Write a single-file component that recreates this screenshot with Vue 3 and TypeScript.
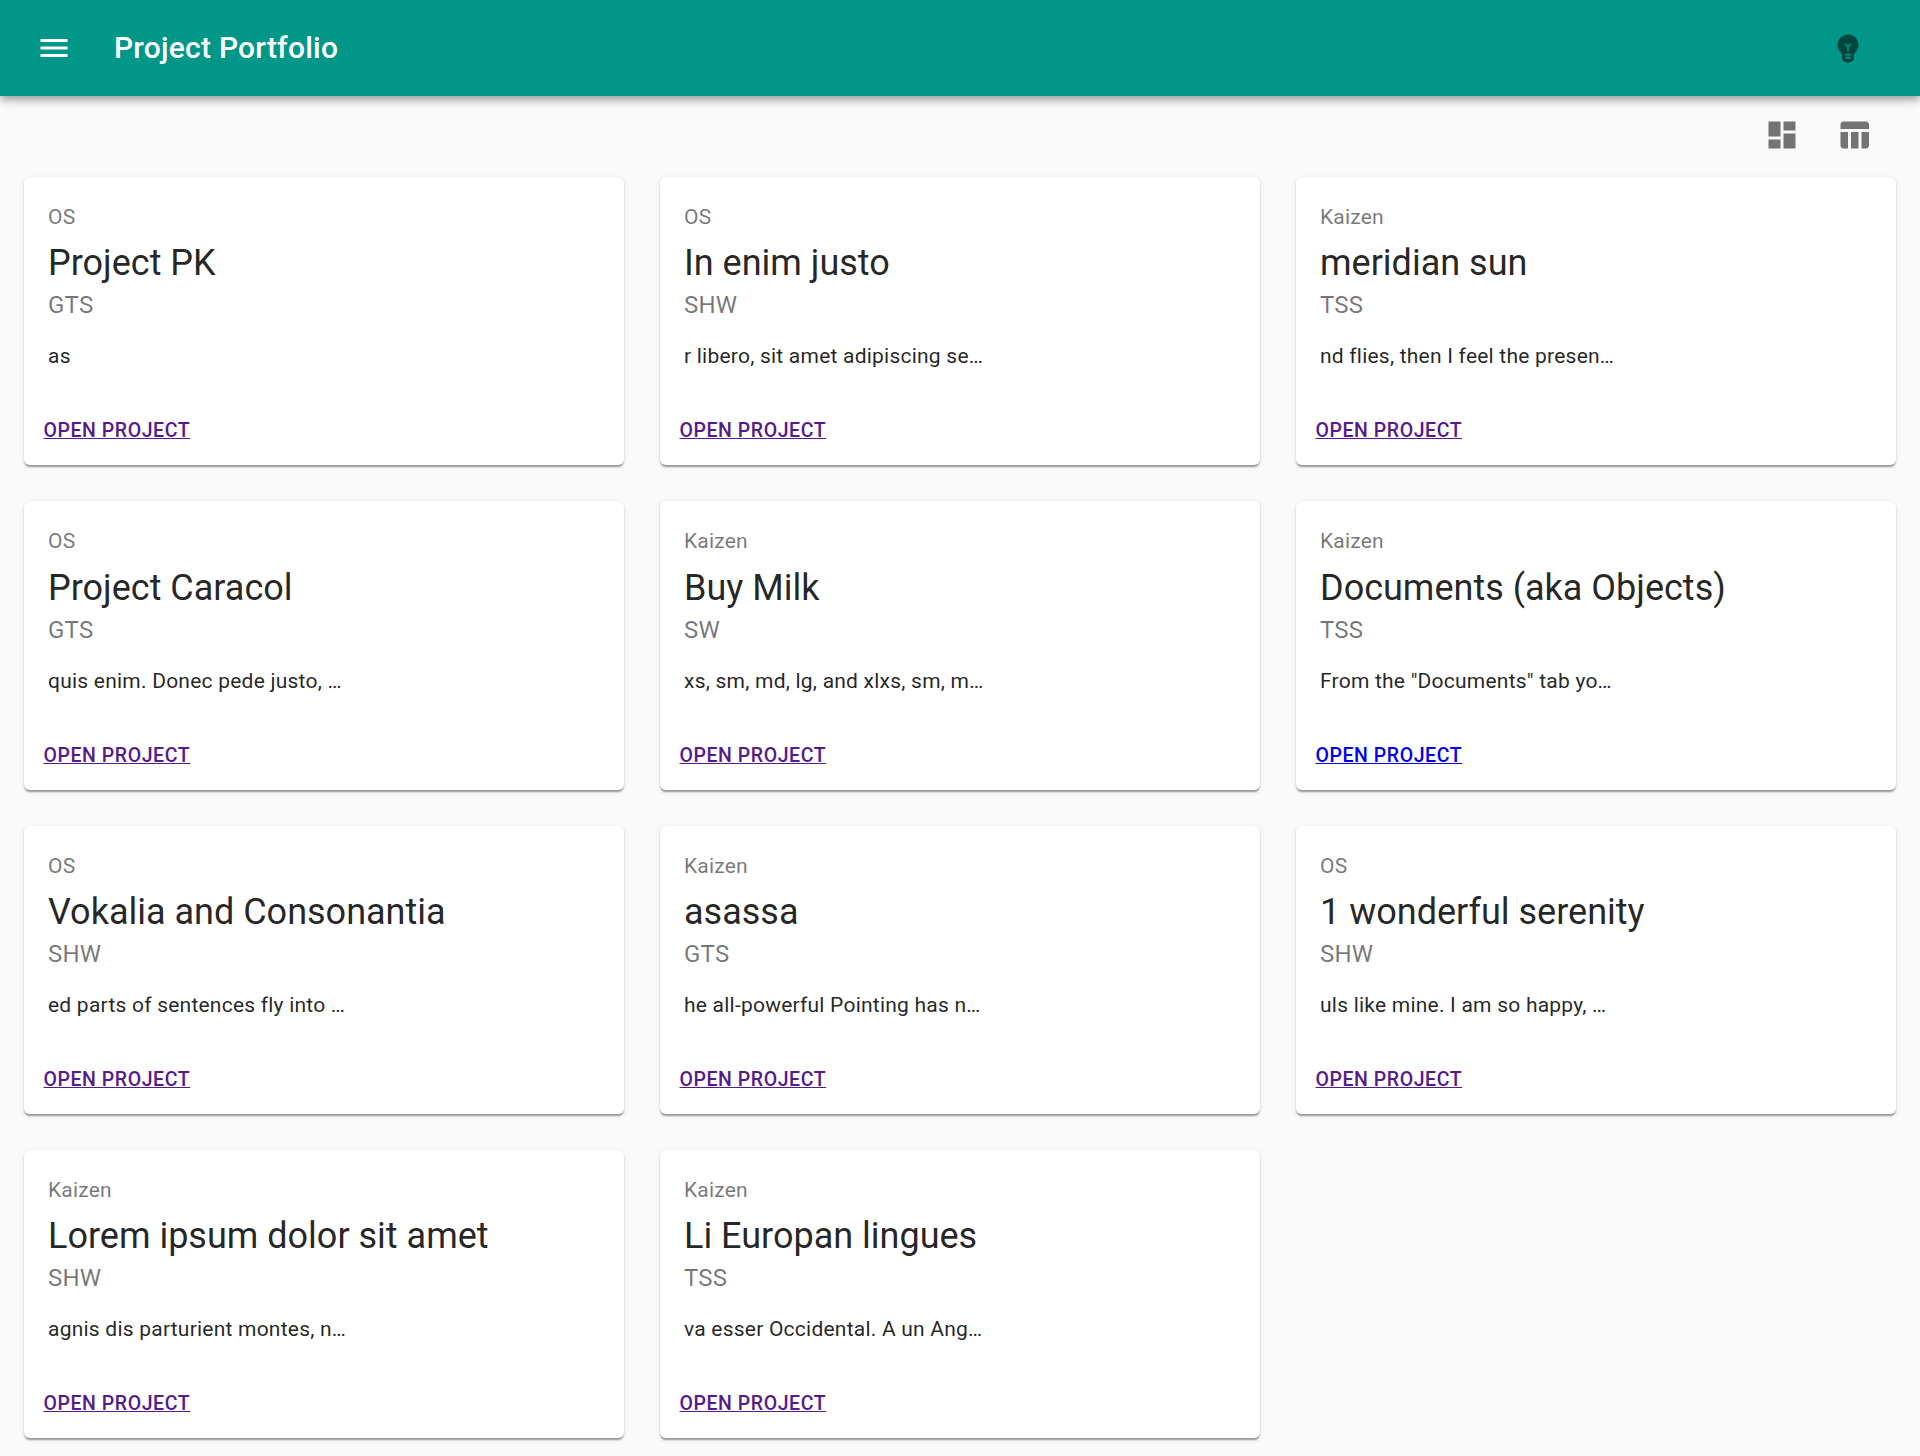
<script setup lang="ts">
interface Project {
  kind: string
  name: string
  team: string
  summary: string
  visited: boolean
}

const projects: Project[] = [
  { kind: 'OS', name: 'Project PK', team: 'GTS', summary: 'as', visited: true },
  { kind: 'OS', name: 'In enim justo', team: 'SHW', summary: 'r libero, sit amet adipiscing se…', visited: true },
  { kind: 'Kaizen', name: 'meridian sun', team: 'TSS', summary: 'nd flies, then I feel the presen…', visited: true },
  { kind: 'OS', name: 'Project Caracol', team: 'GTS', summary: 'quis enim. Donec pede justo, …', visited: true },
  { kind: 'Kaizen', name: 'Buy Milk', team: 'SW', summary: 'xs, sm, md, lg, and xlxs, sm, m…', visited: true },
  { kind: 'Kaizen', name: 'Documents (aka Objects)', team: 'TSS', summary: 'From the "Documents" tab yo…', visited: false },
  { kind: 'OS', name: 'Vokalia and Consonantia', team: 'SHW', summary: 'ed parts of sentences fly into …', visited: true },
  { kind: 'Kaizen', name: 'asassa', team: 'GTS', summary: 'he all-powerful Pointing has n…', visited: true },
  { kind: 'OS', name: '1 wonderful serenity', team: 'SHW', summary: 'uls like mine. I am so happy, …', visited: true },
  { kind: 'Kaizen', name: 'Lorem ipsum dolor sit amet', team: 'SHW', summary: 'agnis dis parturient montes, n…', visited: true },
  { kind: 'Kaizen', name: 'Li Europan lingues', team: 'TSS', summary: 'va esser Occidental. A un Ang…', visited: true },
]
</script>

<template>
  <div class="page">
    <header class="app-bar">
      <button class="icon-button menu" aria-label="Open menu">
        <svg viewBox="0 0 24 24"><path d="M3 18h18v-2H3v2zm0-5h18v-2H3v2zm0-7v2h18V6H3z" /></svg>
      </button>
      <h1 class="app-title">Project Portfolio</h1>
      <button class="icon-button" aria-label="Toggle theme">
        <svg viewBox="0 0 24 24"><path d="M12 3c-.46 0-.93.04-1.4.14-2.76.53-4.96 2.76-5.48 5.52-.48 2.61.48 5.01 2.22 6.56.43.38.66.91.66 1.47V19c0 1.1.9 2 2 2h.28c.35.6.98 1 1.72 1s1.38-.4 1.72-1H14c1.1 0 2-.9 2-2v-2.31c0-.55.22-1.09.64-1.46C18.09 13.95 19 12.08 19 10c0-3.87-3.13-7-7-7zm2 16h-4v-1h4v1zm0-2h-4v-1h4v1zm-1.5-5.59V14h-1v-2.59L9.67 9.59l.71-.71L12 10.5l1.62-1.62.71.71-1.83 1.82z" /></svg>
      </button>
    </header>

    <div class="view-switch">
      <button class="icon-button" aria-label="Card view">
        <svg viewBox="0 0 24 24"><path d="M3 13h8V3H3v10zm0 8h8v-6H3v6zm10 0h8V11h-8v10zm0-18v6h8V3h-8z" /></svg>
      </button>
      <button class="icon-button" aria-label="Table view">
        <svg viewBox="0 0 24 24"><path d="M10 10.02h5V21h-5V10.02zM17 21h3c1.1 0 2-.9 2-2v-9h-5v11zm3-18H5c-1.1 0-2 .9-2 2v3h19V5c0-1.1-.9-2-2-2zM3 19c0 1.1.9 2 2 2h3V10H3v9z" /></svg>
      </button>
    </div>

    <main class="grid">
      <article v-for="project in projects" :key="project.name" class="card">
        <div class="content">
          <p class="kind">{{ project.kind }}</p>
          <h2 class="name">{{ project.name }}</h2>
          <p class="team">{{ project.team }}</p>
          <p class="summary">{{ project.summary }}</p>
        </div>
        <div class="actions">
          <a href="#" class="open" :class="{ visited: project.visited }">OPEN PROJECT</a>
        </div>
      </article>
    </main>
  </div>
</template>

<style>
body {
  margin: 0;
  background: #fafafa;
}
</style>

<style scoped>
.page {
  box-sizing: border-box;
  height: 1456px;
  overflow: hidden;
  background: #fafafa;
  color: rgba(0, 0, 0, 0.87);
  font-family: Roboto, "Liberation Sans", sans-serif;
}

.app-bar {
  position: relative;
  box-sizing: border-box;
  display: flex;
  align-items: center;
  height: 96px;
  padding: 0 36px 0 18px;
  background: #009688;
  color: #fff;
  box-shadow:
    0 3px 6px -1.5px rgba(0, 0, 0, 0.2),
    0 6px 7.5px 0 rgba(0, 0, 0, 0.14),
    0 1.5px 15px 0 rgba(0, 0, 0, 0.12);
}

.app-title {
  flex: 1;
  margin: 0;
  font-size: 30px;
  font-weight: 500;
  line-height: 48px;
  letter-spacing: 0.0075em;
}

.icon-button {
  display: flex;
  box-sizing: border-box;
  width: 72px;
  height: 72px;
  padding: 18px;
  border: 0;
  background: transparent;
  color: rgba(0, 0, 0, 0.54);
}

.icon-button svg {
  width: 36px;
  height: 36px;
  fill: currentColor;
}

.menu {
  margin-right: 24px;
  color: #fff;
}

.view-switch {
  display: flex;
  justify-content: flex-end;
  padding: 3px 30px 6px 0;
}

.grid {
  display: grid;
  grid-template-columns: repeat(3, 600px);
  column-gap: 36px;
  row-gap: 36.2px;
  padding: 0 24px;
}

.card {
  box-sizing: border-box;
  height: 288.2px;
  border-radius: 6px;
  background: #fff;
  box-shadow:
    0 3px 1.5px -1.5px rgba(0, 0, 0, 0.2),
    0 1.5px 1.5px 0 rgba(0, 0, 0, 0.14),
    0 1.5px 4.5px 0 rgba(0, 0, 0, 0.12);
}

.content {
  padding: 24px;
}

.kind,
.name,
.team,
.summary {
  margin: 0;
  font-weight: 400;
}

.kind {
  margin-bottom: 6.2px;
  color: rgba(0, 0, 0, 0.54);
  font-size: 21px;
  line-height: 32px;
  letter-spacing: 0.00938em;
}

.name {
  font-size: 36px;
  line-height: 48px;
}

.team {
  margin-bottom: 18px;
  color: rgba(0, 0, 0, 0.54);
  font-size: 24px;
  line-height: 36px;
  letter-spacing: 0.00938em;
}

.summary {
  font-size: 21px;
  line-height: 30px;
  letter-spacing: 0.01071em;
}

.actions {
  display: flex;
  padding: 12px;
}

.open {
  padding: 7px 7.5px 5px;
  color: #0000ee;
  font-size: 19.5px;
  font-weight: 500;
  line-height: 34px;
  letter-spacing: 0.02857em;
}

.open.visited {
  color: #551a8b;
}
</style>
